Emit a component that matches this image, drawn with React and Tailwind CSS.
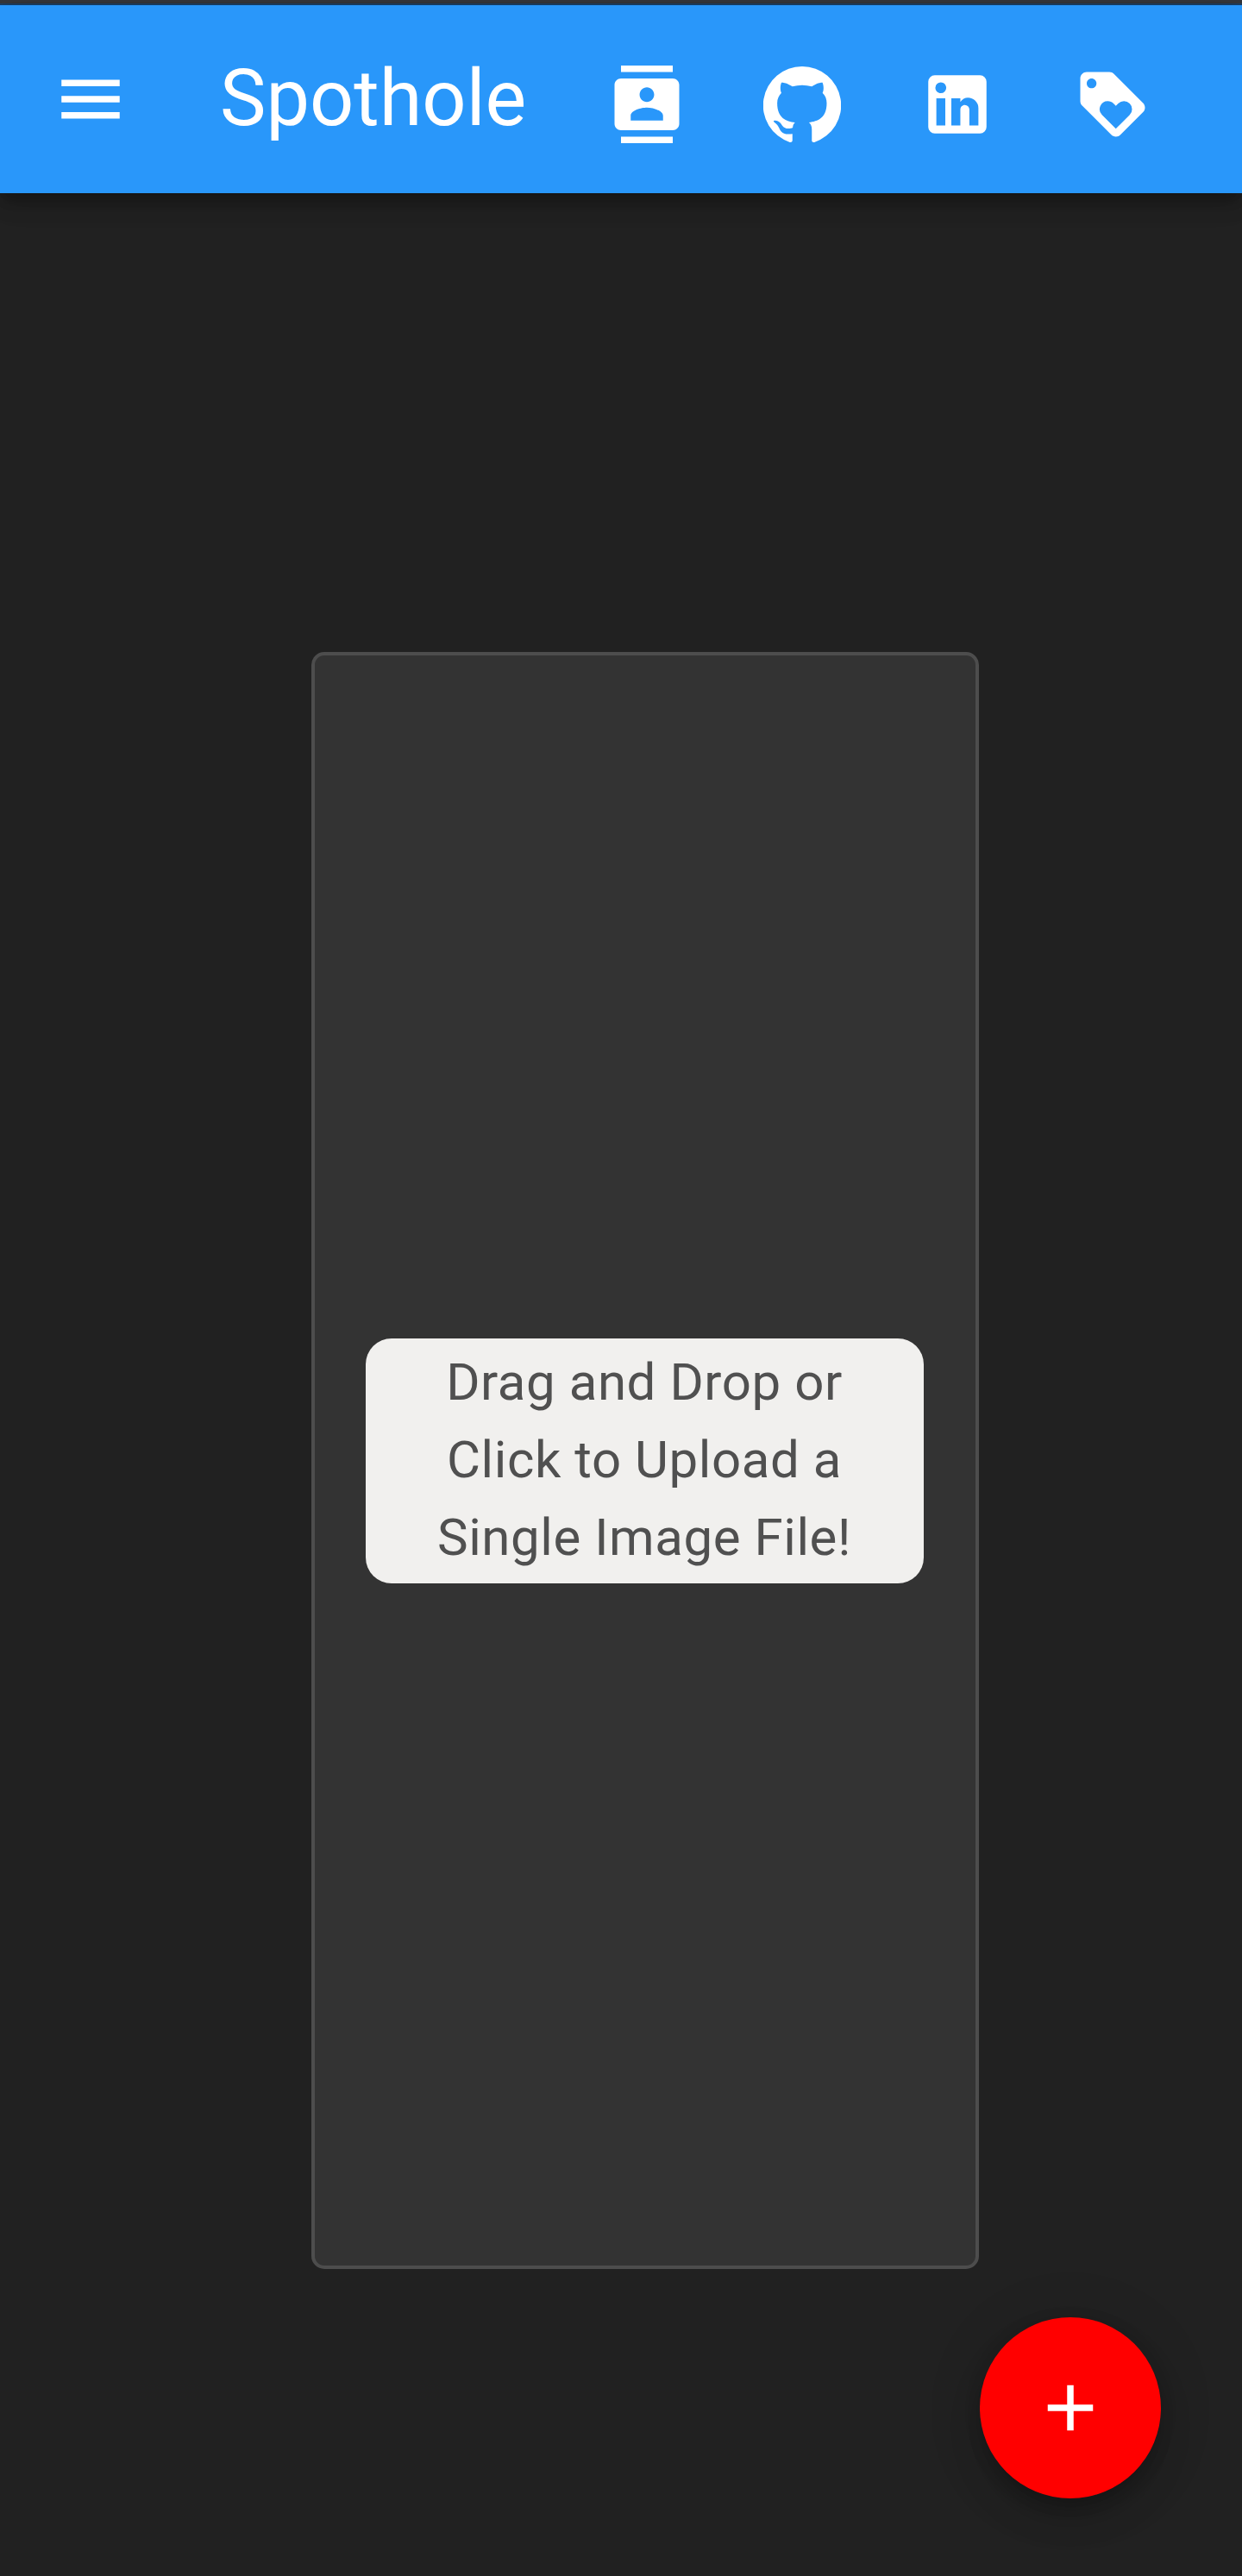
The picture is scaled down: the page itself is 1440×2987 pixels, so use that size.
import React from "react";
import { MdMenu, MdContacts, MdLoyalty, MdAdd } from "react-icons/md";

const GITHUB_PATH =
  "M12 .3a12 12 0 0 0-3.8 23.4c.6.1.8-.3.8-.6v-2c-3.3.7-4-1.6-4-1.6-.6-1.4-1.4-1.8-1.4-1.8-1-.7.1-.7.1-.7 1.2 0 1.9 1.2 1.9 1.2 1 1.8 2.8 1.3 3.5 1 0-.8.4-1.3.7-1.6-2.7-.3-5.5-1.3-5.5-6 0-1.2.5-2.3 1.3-3.1-.2-.4-.6-1.6 0-3.2 0 0 1-.3 3.4 1.2a11.5 11.5 0 0 1 6 0c2.3-1.5 3.3-1.2 3.3-1.2.6 1.6.2 2.8 0 3.2.9.8 1.3 1.9 1.3 3.2 0 4.6-2.8 5.6-5.5 5.9.5.4.9 1 .9 2.2v3.3c0 .3.1.7.8.6A12 12 0 0 0 12 .3";

const LINKEDIN_PATH =
  "M19 3a2 2 0 0 1 2 2v14a2 2 0 0 1-2 2H5a2 2 0 0 1-2-2V5a2 2 0 0 1 2-2h14m-.5 15.5v-5.3a3.26 3.26 0 0 0-3.26-3.26c-.85 0-1.84.52-2.32 1.3v-1.11h-2.79v8.37h2.79v-4.93c0-.77.62-1.4 1.39-1.4a1.4 1.4 0 0 1 1.4 1.4v4.93h2.79M6.88 8.56a1.68 1.68 0 0 0 1.68-1.68c0-.93-.75-1.69-1.68-1.69a1.69 1.69 0 0 0-1.69 1.69c0 .93.76 1.68 1.69 1.68m1.39 9.94v-8.37H5.5v8.37h2.77z";

function Glyph({ d }) {
  return (
    <svg viewBox="0 0 24 24" fill="currentColor" className="size-[90px]">
      <path d={d} />
    </svg>
  );
}

function Header() {
  return (
    <header className="relative flex h-[218px] items-center bg-[#2997fa] pl-[60px] text-white shadow-[0_8px_15px_-4px_rgba(0,0,0,0.2),0_15px_19px_0_rgba(0,0,0,0.14),0_4px_38px_0_rgba(0,0,0,0.12)]">
      <button aria-label="Menu" className="size-[90px]">
        <MdMenu className="size-[90px]" />
      </button>
      <h1 className="ml-[105px] w-[450px] text-[90px] leading-[120px] font-normal">Spothole</h1>
      <nav className="flex gap-[90px] pt-[11px]">
        <a aria-label="Contact"><MdContacts className="size-[90px]" /></a>
        <a aria-label="GitHub"><Glyph d={GITHUB_PATH} /></a>
        <a aria-label="LinkedIn"><Glyph d={LINKEDIN_PATH} /></a>
        <a aria-label="Support"><MdLoyalty className="size-[90px]" /></a>
      </nav>
    </header>
  );
}

function UploadCard() {
  return (
    <section className="mt-[532px] ml-[361px] flex h-[1875px] w-[774px] items-center justify-center rounded-[15px] border-4 border-[#4d4d4d] bg-[#333333]">
      <p className="mr-[2px] w-[647px] rounded-[30px] bg-[#f1f0ee] px-[60px] pt-[6px] pb-[8px] text-center text-[60px] leading-[90px] tracking-[0.56px] text-[#505050]">
        Drag and Drop or
        <br />
        Click to Upload a
        <br />
        Single Image File!
      </p>
    </section>
  );
}

export default function App() {
  return (
    <div className="relative h-[2987px] w-[1440px] overflow-hidden bg-[#212121] font-['Roboto',sans-serif]">
      <div className="h-[6px] border-b-2 border-[#1d3f63] bg-[#35363a]" />
      <Header />
      <UploadCard />
      <button
        aria-label="Add"
        className="absolute right-[94px] bottom-[90px] flex size-[210px] items-center justify-center rounded-full bg-[#ff0000] text-white shadow-[0_11px_19px_-4px_rgba(0,0,0,0.2),0_22px_38px_0_rgba(0,0,0,0.14),0_4px_68px_0_rgba(0,0,0,0.12)]"
      >
        <MdAdd className="size-[90px]" />
      </button>
    </div>
  );
}
